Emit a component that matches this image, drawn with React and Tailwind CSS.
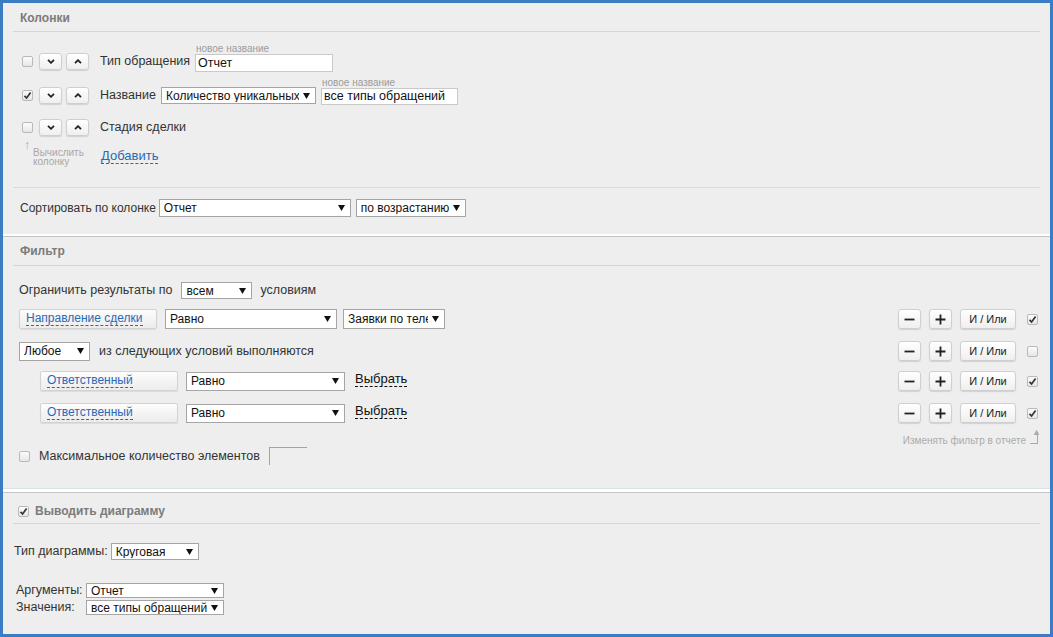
import React from "react";

// small helpers
const Check = ({ checked }) => (
  <span className="inline-flex items-center justify-center w-[11px] h-[11px] shrink-0 rounded-[2px] border border-[#b9b9b9] bg-gradient-to-b from-[#fcfcfc] to-[#e6e6e6]">
    {checked && (
      <svg width="9" height="9" viewBox="0 0 9 9">
        <path d="M1.5 4.8 L3.6 7 L7.6 1.6" fill="none" stroke="#333" strokeWidth="1.7" />
      </svg>
    )}
  </span>
);

const Arrow = () => (
  <svg width="7" height="6" viewBox="0 0 7 6" className="shrink-0">
    <path d="M0 0 H7 L3.5 6 Z" fill="#111" />
  </svg>
);

const Sel = ({ value, w, h = "h-[18px]", cls = "text-[12px]" }) => (
  <div className={`${w} ${h} ${cls} shrink-0 flex items-center justify-between bg-white border border-[#a5a5a5] pl-[4px] pr-[5px] overflow-hidden`}>
    <span className="whitespace-nowrap overflow-hidden leading-none">{value}</span>
    <span className="pl-[4px]"><Arrow /></span>
  </div>
);

const Inp = ({ value, w, h = "h-[18px]" }) => (
  <div className={`${w} ${h} shrink-0 flex items-center bg-white border border-[#c9c9c9] px-[2px] text-[12.5px] text-[#111] leading-none`}>
    {value}
  </div>
);

const MoveBtn = ({ up }) => (
  <div className="w-[23px] h-[17px] shrink-0 flex items-center justify-center rounded-[3px] border border-[#cfcfcf] bg-gradient-to-b from-white to-[#efefef] shadow-[0_1px_1px_rgba(0,0,0,0.12)]">
    <svg width="8" height="5" viewBox="0 0 8 5">
      <path d={up ? "M1 4.2 L4 1.2 L7 4.2" : "M1 0.8 L4 3.8 L7 0.8"} fill="none" stroke="#222" strokeWidth="1.8" />
    </svg>
  </div>
);

const SmallBtn = ({ children, w = "w-[23px]" }) => (
  <div className={`${w} h-[20px] shrink-0 flex items-center justify-center rounded-[3px] border border-[#cfcfcf] bg-gradient-to-b from-white to-[#efefef] shadow-[0_1px_1px_rgba(0,0,0,0.12)] text-[11px] text-[#222]`}>
    {children}
  </div>
);

const Minus = () => (
  <svg width="11" height="11" viewBox="0 0 11 11">
    <path d="M0.5 5.5 H10.5" stroke="#222" strokeWidth="1.8" />
  </svg>
);
const Plus = () => (
  <svg width="11" height="11" viewBox="0 0 11 11">
    <path d="M0.5 5.5 H10.5 M5.5 0.5 V10.5" stroke="#222" strokeWidth="1.8" />
  </svg>
);

const Controls = ({ checked }) => (
  <div className="ml-auto flex items-center">
    <SmallBtn><Minus /></SmallBtn>
    <div className="w-[8px]" />
    <SmallBtn><Plus /></SmallBtn>
    <div className="w-[8px]" />
    <SmallBtn w="w-[56px]">И / Или</SmallBtn>
    <div className="w-[11px]" />
    <Check checked={checked} />
  </div>
);

const FieldBtn = ({ label }) => (
  <div className="w-[138px] h-[20px] shrink-0 flex items-center pl-[6px] rounded-[2px] border border-[#d2d2d2] bg-gradient-to-b from-[#fdfdfd] to-[#ececec] shadow-[0_1px_1px_rgba(0,0,0,0.08)] text-[12px]">
    <span className="text-[#2a6ab5] leading-[13px] border-b border-dashed border-[#2a6ab5]">{label}</span>
  </div>
);

const Header = ({ children, h = "h-[29px]", pt = "pt-[7px]" }) => (
  <div className={`mx-[10px] ${h} ${pt} pl-[7px] border-b border-[#d6d6d6] text-[12px] font-bold text-[#7b7b7b] leading-[16px]`}>
    {children}
  </div>
);

export default function App() {
  return (
    <div
      className="w-[1053px] h-[637px] border-[3px] border-[#3b7dc4] bg-[#eeeeee] text-[12.5px] text-[#333] overflow-hidden"
      style={{ fontFamily: '"Liberation Sans", Arial, sans-serif' }}
    >
      {/* Колонки */}
      <div className="border-b-2 border-white pb-[17px]">
        <Header>Колонки</Header>

        <div className="pl-[19px]">
          {/* row 1 */}
          <div className="mt-[12px] flex items-end">
            <div className="flex items-center h-[17px] mb-[2px]">
              <Check />
              <div className="w-[6px]" />
              <MoveBtn />
              <div className="w-[4px]" />
              <MoveBtn up />
              <span className="ml-[11px] w-[95px]">Тип обращения</span>
            </div>
            <div className="flex flex-col">
              <span className="text-[10px] leading-[10px] text-[#9c9c9c] pl-[1px]">новое название</span>
              <Inp value="Отчет" w="w-[138px]" />
            </div>
          </div>

          {/* row 2 */}
          <div className="mt-[5px] flex items-end">
            <div className="flex items-center h-[17px] mb-[1px]">
              <Check checked />
              <div className="w-[6px]" />
              <MoveBtn />
              <div className="w-[4px]" />
              <MoveBtn up />
              <span className="ml-[11px] w-[61px]">Название</span>
              <Sel value="Количество уникальных" w="w-[155px]" h="h-[17px]" cls="text-[12px] text-[#111]" />
            </div>
            <div className="flex flex-col ml-[5px]">
              <span className="text-[10px] leading-[11px] text-[#9c9c9c] pl-[1px]">новое название</span>
              <Inp value="все типы обращений" w="w-[137px]" h="h-[17px]" />
            </div>
          </div>

          {/* row 3 */}
          <div className="mt-[14px] flex items-center h-[17px]">
            <Check />
            <div className="w-[6px]" />
            <MoveBtn />
            <div className="w-[4px]" />
            <MoveBtn up />
            <span className="ml-[11px]">Стадия сделки</span>
          </div>

          {/* add */}
          <div className="mt-[4px] flex items-start">
            <div className="w-[79px] flex items-start">
              <span className="w-[11px] pl-[2px] text-[12px] leading-[10px] text-[#aaa]">↑</span>
              <span className="mt-[8px] text-[10px] leading-[9px] text-[#a8a8a8]">
                Вычислить
                <br />
                колонку
              </span>
            </div>
            <span className="mt-[9px] leading-[14px] text-[13px] text-[#2a6ab5] border-b border-dashed border-[#2a6ab5]">Добавить</span>
          </div>
        </div>

        <div className="mx-[10px] mt-[21px] border-t border-[#dadada]" />

        <div className="mt-[11px] pl-[17px] flex items-center text-[12px]">
          <span>Сортировать по колонке</span>
          <div className="w-[3px]" />
          <Sel value="Отчет" w="w-[192px]" h="h-[18px]" cls="text-[12px] text-[#111]" />
          <div className="w-[5px]" />
          <Sel value="по возрастанию" w="w-[110px]" h="h-[18px]" cls="text-[12px] text-[#111]" />
        </div>
      </div>

      {/* Фильтр */}
      <div className="border-t border-[#c4c4c4] pb-[23px] border-b border-b-[#dbe4e4]">
        <Header pt="pt-[6px]">Фильтр</Header>

        <div className="pl-[16px] pr-[12px]">
          <div className="mt-[16px] flex items-center h-[17px]">
            <span>Ограничить результаты по</span>
            <div className="w-[9px]" />
            <Sel value="всем" w="w-[71px]" h="h-[17px]" cls="text-[12px] text-[#111]" />
            <span className="ml-[8px]">условиям</span>
          </div>

          <div className="mt-[10px] flex items-center h-[20px]">
            <FieldBtn label="Направление сделки" />
            <div className="w-[8px]" />
            <Sel value="Равно" w="w-[172px]" h="h-[20px]" cls="text-[12px] text-[#111]" />
            <div className="w-[6px]" />
            <Sel value="Заявки по телефону" w="w-[102px]" h="h-[20px]" cls="text-[12px] text-[#111]" />
            <Controls checked />
          </div>

          <div className="mt-[12px] flex items-center h-[20px]">
            <Sel value="Любое" w="w-[71px]" h="h-[19px]" cls="text-[12px] text-[#111]" />
            <span className="ml-[9px]">из следующих условий выполняются</span>
            <Controls />
          </div>

          <div className="mt-[10px] pl-[21px] flex items-center h-[20px]">
            <FieldBtn label="Ответственный" />
            <div className="w-[8px]" />
            <Sel value="Равно" w="w-[159px]" h="h-[19px]" cls="text-[12px] text-[#111]" />
            <span className="ml-[10px] mb-[3px] leading-[14px] text-[13px] text-[#111] border-b border-dashed border-[#111]">Выбрать</span>
            <Controls checked />
          </div>

          <div className="mt-[12px] pl-[21px] flex items-center h-[20px]">
            <FieldBtn label="Ответственный" />
            <div className="w-[8px]" />
            <Sel value="Равно" w="w-[159px]" h="h-[19px]" cls="text-[12px] text-[#111]" />
            <span className="ml-[10px] mb-[3px] leading-[14px] text-[13px] text-[#111] border-b border-dashed border-[#111]">Выбрать</span>
            <Controls checked />
          </div>

          <div className="mt-[7px] h-[17px] flex items-end justify-end">
            <span className="text-[10px] leading-[12px] text-[#ababab]">Изменять фильтр в отчете</span>
            <span className="ml-[4px] mb-[3px] w-[8px] h-[12px] border-r border-b border-[#aaa] relative">
              <span className="absolute -top-[4px] -right-[4px] text-[9px] leading-none text-[#aaa]">▲</span>
            </span>
          </div>

          <div className="flex items-center h-[18px]">
            <Check />
            <span className="ml-[9px]">Максимальное количество элементов</span>
            <div className="ml-[9px] w-[38px] h-[18px] border-t border-l border-[#a3a3a3]" />
          </div>
        </div>
      </div>

      {/* Диаграмма */}
      <div className="border-t-[3px] border-white">
        <div className="border-t border-[#c4c4c4]">
          <div className="mx-[10px] h-[31px] pt-[6px] pl-[5px] flex items-center border-b border-[#d6d6d6] text-[12px] font-bold text-[#7b7b7b]">
            <Check checked />
            <span className="ml-[6px]">Выводить диаграмму</span>
          </div>

          <div className="mt-[19px] pl-[11px] flex items-center h-[17px]">
            <span>Тип диаграммы:</span>
            <div className="w-[3px]" />
            <Sel value="Круговая" w="w-[88px]" h="h-[17px]" cls="text-[12px] text-[#111]" />
          </div>

          <div className="mt-[23px] pl-[13px] grid grid-cols-[70px_138px] gap-y-[2px] items-center leading-[15px]">
            <span>Аргументы:</span>
            <Sel value="Отчет" w="w-[138px]" h="h-[15px]" cls="text-[12px] text-[#111]" />
            <span>Значения:</span>
            <Sel value="все типы обращений" w="w-[138px]" h="h-[15px]" cls="text-[12px] text-[#111]" />
          </div>
        </div>
      </div>
    </div>
  );
}
